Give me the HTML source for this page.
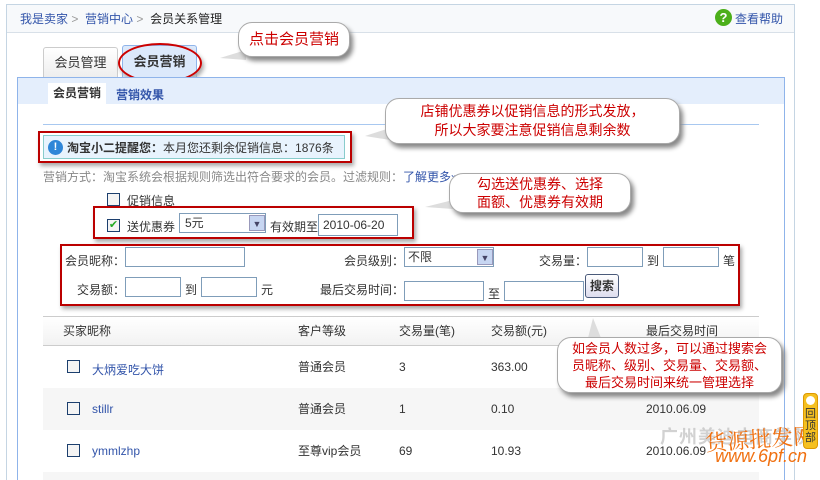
<!DOCTYPE html>
<html style="width:820px;height:480px;overflow:hidden"><head><meta charset="utf-8"><style>
*{margin:0;padding:0;box-sizing:border-box}
html,body{width:820px;height:480px;overflow:hidden}
body{background:#fff;position:relative;font-family:"Liberation Sans","Noto Sans CJK SC",sans-serif;font-size:12px;color:#333}
.a{position:absolute}
.lk{color:#3355aa}
.inp{position:absolute;border:1px solid #7f9db9;background:#fff;height:20px}
.bub{position:absolute;background:#fff;border:1px solid #aaa;border-radius:14px;box-shadow:3px 4px 5px #888;color:#c00;font-size:14px;line-height:19px;text-align:center;z-index:5}
.red{position:absolute;border:2px solid #b00;box-shadow:2px 3px 4px #aaa}
.cb{position:absolute;width:13px;height:13px;border:1px solid #1c3f6e;background:#f4f4f4}
.row{position:absolute;left:43px;width:716px;height:42px}
.row span{position:absolute;top:14px}
</style></head><body>
<div class="a" style="left:6px;top:4px;width:789px;height:476px;border:1px solid #c5d5e3;border-bottom:none"></div>
<div class="a" style="left:7px;top:5px;width:787px;height:28px;background:#f7f9fb;border-bottom:1px solid #d8e0e8"></div>
<div class="a" style="left:20px;top:10px"><span class="lk">我是卖家</span> <span style="color:#999">&gt;</span> &nbsp;<span class="lk">营销中心</span> <span style="color:#999">&gt;</span> &nbsp;<b style="font-weight:normal;color:#222">会员关系管理</b></div>
<div class="a" style="left:715px;top:9px;width:17px;height:17px;border-radius:50%;background:#4caf1a;color:#fff;font-weight:bold;text-align:center;line-height:17px;font-size:13px">?</div>
<div class="a lk" style="left:735px;top:10px">查看帮助</div>
<div class="a" style="left:43px;top:47px;width:75px;height:30px;background:linear-gradient(#fff,#eee);border:1px solid #ccc;border-bottom:none;border-radius:3px 3px 0 0;font-size:13px;text-align:center;line-height:30px">会员管理</div>
<div class="a" style="left:122px;top:45px;width:75px;height:33px;background:#dce9fb;border:1px solid #8fb4ea;border-bottom:none;border-radius:3px 3px 0 0;font-size:13px;font-weight:bold;text-align:center;line-height:32px">会员营销</div>
<div class="a" style="left:118px;top:43px;width:84px;height:40px;border:2px solid #c00;border-radius:50%;box-shadow:2px 3px 4px #aaa"></div>
<div class="a" style="left:17px;top:77px;width:768px;height:403px;border:1px solid #8fb4ea;border-bottom:none"></div>
<div class="a" style="left:18px;top:78px;width:766px;height:26px;background:#e4eefc"></div>
<div class="a" style="left:48px;top:83px;width:58px;height:21px;background:#fff;font-weight:bold;text-align:center;line-height:21px">会员营销</div>
<div class="a lk" style="left:116px;top:86px;font-weight:bold">营销效果</div>
<div class="a" style="left:43px;top:124px;width:716px;height:1px;background:#a8c8f0"></div>
<div class="a" style="left:43px;top:135px;width:302px;height:24px;background:#e8f3fd;border:1px solid #8cc"></div>
<div class="a" style="left:48px;top:140px;width:15px;height:15px;border-radius:50%;background:#2f86d8;color:#fff;font-weight:bold;text-align:center;line-height:15px;font-size:11px">!</div>
<div class="a" style="left:67px;top:139px;font-size:12px"><b>淘宝小二提醒您：</b>本月您还剩余促销信息：1876条</div>
<div class="red" style="left:38px;top:131px;width:314px;height:32px"></div>
<div class="a" style="left:43px;top:168px;color:#888">营销方式：淘宝系统会根据规则筛选出符合要求的会员。过滤规则：<span class="lk">了解更多»</span></div>
<div class="cb" style="left:107px;top:193px"></div><div class="a" style="left:127px;top:192px">促销信息</div>
<div class="cb" style="left:107px;top:219px;color:#2a2;font-size:11px;line-height:11px;text-align:center">✔</div><div class="a" style="left:127px;top:218px">送优惠券</div>
<div class="a" style="left:179px;top:213px;width:87px;height:20px;border:1px solid #7f9db9;background:#fff;padding-left:5px;line-height:18px">5元</div>
<div class="a" style="left:249px;top:215px;width:16px;height:16px;background:#c7d6f2;border:1px solid #99b;font-size:9px;text-align:center;line-height:16px;color:#446">▼</div>
<div class="a" style="left:270px;top:218px">有效期至</div>
<div class="inp" style="left:318px;top:214px;width:80px;height:22px;padding-left:4px;line-height:20px;font-size:12px">2010-06-20</div>
<div class="red" style="left:93px;top:206px;width:321px;height:33px"></div>
<div class="red" style="left:60px;top:244px;width:680px;height:62px"></div>
<div class="a" style="left:65px;top:252px">会员昵称：</div><div class="inp" style="left:125px;top:247px;width:120px"></div>
<div class="a" style="left:344px;top:252px">会员级别：</div>
<div class="a" style="left:404px;top:247px;width:90px;height:20px;border:1px solid #7f9db9;padding-left:3px;line-height:18px">不限</div>
<div class="a" style="left:477px;top:249px;width:16px;height:16px;background:#c7d6f2;border:1px solid #99b;font-size:9px;text-align:center;line-height:16px;color:#446">▼</div>
<div class="a" style="left:539px;top:252px">交易量：</div><div class="inp" style="left:587px;top:247px;width:56px"></div>
<div class="a" style="left:647px;top:252px">到</div><div class="inp" style="left:663px;top:247px;width:56px"></div>
<div class="a" style="left:723px;top:252px">笔</div>
<div class="a" style="left:77px;top:281px">交易额：</div><div class="inp" style="left:125px;top:277px;width:56px"></div>
<div class="a" style="left:185px;top:281px">到</div><div class="inp" style="left:201px;top:277px;width:56px"></div>
<div class="a" style="left:261px;top:281px">元</div>
<div class="a" style="left:320px;top:281px">最后交易时间：</div><div class="inp" style="left:404px;top:281px;width:80px"></div>
<div class="a" style="left:488px;top:285px">至</div><div class="inp" style="left:504px;top:281px;width:80px"></div>
<div class="a" style="left:585px;top:274px;width:34px;height:24px;border:1px solid #4a5a7a;border-radius:3px;background:linear-gradient(#fff,#dde);text-align:center;line-height:22px;font-weight:bold">搜索</div>
<div class="a" style="left:43px;top:316px;width:716px;height:30px;background:linear-gradient(#fff,#f2f2f2);border-top:1px solid #ccc;border-bottom:1px solid #ccc"></div>
<div class="a" style="left:63px;top:322px">买家昵称</div><div class="a" style="left:298px;top:322px">客户等级</div><div class="a" style="left:399px;top:322px">交易量(笔)</div><div class="a" style="left:491px;top:322px">交易额(元)</div><div class="a" style="left:646px;top:322px">最后交易时间</div>
<div class="row" style="top:346px;background:#fff"><div class="cb" style="left:24px;top:14px"></div><span class="lk" style="left:49px;top:15px">大炳爱吃大饼</span><span style="left:255px;top:12px">普通会员</span><span style="left:356px">3</span><span style="left:448px">363.00</span></div>
<div class="row" style="top:388px;background:#f6f6f6"><div class="cb" style="left:24px;top:14px"></div><span class="lk" style="left:49px">stillr</span><span style="left:255px;top:12px">普通会员</span><span style="left:356px">1</span><span style="left:448px">0.10</span><span style="left:603px">2010.06.09</span></div>
<div class="row" style="top:430px;background:#fff"><div class="cb" style="left:24px;top:14px"></div><span class="lk" style="left:49px">ymmlzhp</span><span style="left:255px;top:12px">至尊vip会员</span><span style="left:356px">69</span><span style="left:448px">10.93</span><span style="left:603px">2010.06.09</span></div>
<div class="row" style="top:472px;height:8px;background:#f6f6f6"></div>
<div class="a" style="left:660px;top:423px;font-size:18px;color:rgba(180,180,180,.6);font-weight:bold;letter-spacing:1px">广州美迪电商学院</div>
<div class="a" style="left:705px;top:423px;font-size:22px;color:#f07010;font-family:'Liberation Serif','Noto Serif CJK SC',serif;transform:rotate(-4deg)">货源批发网</div>
<div class="a" style="left:715px;top:446px;font-size:18px;color:#f07010;font-style:italic">www.6pf.cn</div>
<div class="a" style="left:803px;top:393px;width:15px;height:56px;background:#f5c020;border:1px solid #d90;border-radius:4px;font-size:11px;line-height:12px;text-align:center;padding-top:14px">回顶部</div>
<div class="a" style="left:806px;top:396px;width:9px;height:9px;border-radius:50%;background:#fff"></div>
<div class="bub" style="left:238px;top:22px;width:112px;height:35px;line-height:33px;font-size:15px">点击会员营销</div>
<div class="a" style="left:220px;top:50px;width:0;height:0;border-top:8px solid transparent;border-bottom:2px solid transparent;border-right:26px solid #ddd;z-index:4"></div>
<div class="bub" style="left:385px;top:98px;width:295px;height:46px;padding-top:3px">店铺优惠券以促销信息的形式发放，<br>所以大家要注意促销信息剩余数</div>
<div class="a" style="left:365px;top:128px;width:0;height:0;border-top:8px solid transparent;border-bottom:4px solid transparent;border-right:25px solid #ddd;z-index:4"></div>
<div class="bub" style="left:449px;top:173px;width:182px;height:40px;line-height:18px;padding-top:1px">勾选送优惠券、选择<br>面额、优惠券有效期</div>
<div class="a" style="left:425px;top:200px;width:0;height:0;border-top:7px solid transparent;border-bottom:2px solid transparent;border-right:28px solid #ddd;z-index:4"></div>
<div class="bub" style="left:557px;top:337px;width:225px;height:56px;line-height:17px;font-size:13px;padding-top:2px">如会员人数过多，可以通过搜索会<br>员昵称、级别、交易量、交易额、<br>最后交易时间来统一管理选择</div>
<div class="a" style="left:588px;top:318px;width:0;height:0;border-left:5px solid transparent;border-right:8px solid transparent;border-bottom:20px solid #ddd;z-index:4"></div>
</body></html>
